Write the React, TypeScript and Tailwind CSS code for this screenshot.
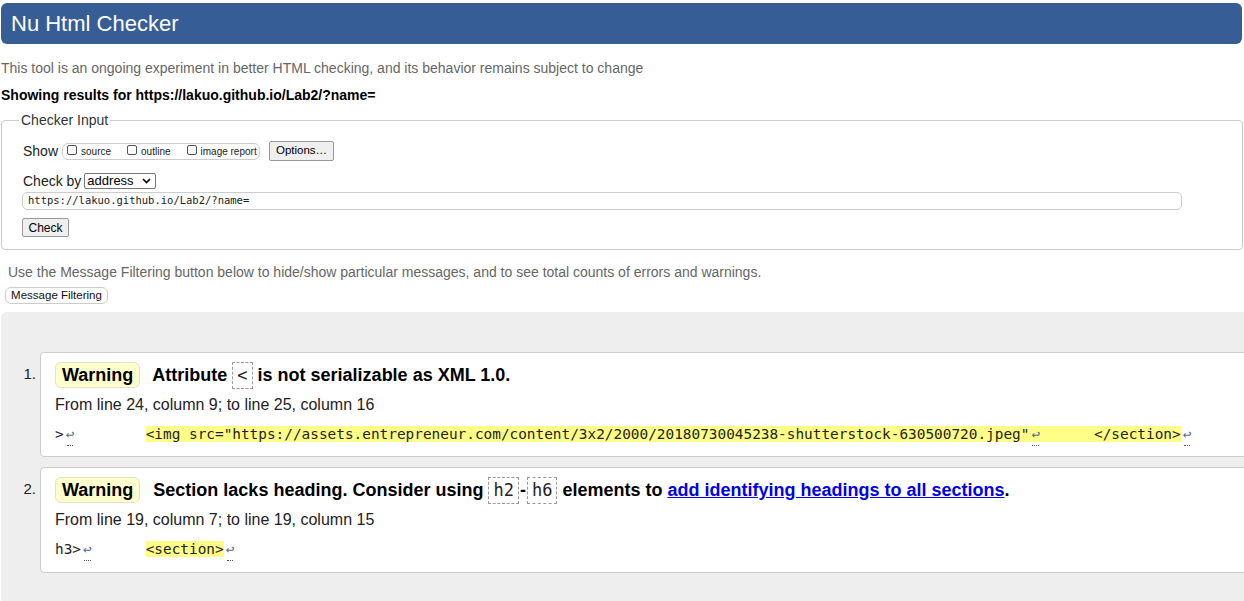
import React from "react";

const sans = { fontFamily: '"Liberation Sans", Arial, sans-serif' };

function LF() {
  return (
    <span className="relative inline-block text-[#5b6b8c] mx-[2px]">
      ↩
      <span className="absolute left-[1px] right-[1px] bottom-[-3px] border-b border-dotted border-[#555]" />
    </span>
  );
}

function CodeBox({ children }: { children: React.ReactNode }) {
  return (
    <span className="inline-flex items-center h-[27px] px-[4px] mx-[5px] border border-dashed border-[#999] font-['DejaVu_Sans_Mono',monospace] font-normal text-[17px] text-[#222]">
      {children}
    </span>
  );
}

function Badge({ mr = "mr-[12px]" }: { mr?: string }) {
  return (
    <span className={"inline-flex items-center h-[26px] px-[6px] rounded-[6px] bg-[#ffffcc] border border-[#e2e2c8] text-[18px] font-bold text-black " + mr}>
      Warning
    </span>
  );
}

function Check() {
  return <span className="inline-block shrink-0 w-[10px] h-[10px] border border-[#555] rounded-[2px] mr-[4px] mb-[3px] bg-white" />;
}

export default function App() {
  return (
    <div className="w-[1244px] h-[601px] overflow-hidden bg-white text-black" style={sans}>
      <div className="pl-[1px] pr-[2px] pt-[3px]">
        <div className="h-[41px] rounded-[6px] bg-[#365d95] flex items-center pl-[10px] text-white text-[22px]">
          Nu Html Checker
        </div>
        <div className="mt-[16px] h-[17px] leading-[17px] text-[14px] text-[#666]">
          This tool is an ongoing experiment in better HTML checking, and its behavior remains subject to change
        </div>
        <div className="mt-[10px] h-[17px] leading-[17px] text-[14px] font-bold">
          Showing results for https://lakuo.github.io/Lab2/?name=
        </div>

        <fieldset className="mt-[8px] border border-[#ccc] rounded-[4px] pl-[21px] pr-[60px] pb-[12px] pt-[13px]">
          <legend className="ml-[-4px] px-[2px] text-[14px] text-[#333] leading-[17px]">Checker Input</legend>
          <div className="flex items-center h-[20px] -mt-[1px]">
            <span className="text-[14px] text-[#222] mr-[4px]">Show</span>
            <span className="inline-flex items-center whitespace-nowrap h-[17px] w-[198px] rounded-[6px] border border-[#ccc] pl-[4px] text-[10px] text-[#222]">
              <Check />
              <span className="mr-[16px]">source</span>
              <Check />
              <span className="mr-[16px]">outline</span>
              <Check />
              <span>image report</span>
            </span>
            <span className="ml-[9px] inline-flex items-center justify-center h-[20px] w-[65px] border border-[#999] bg-[#efefef] rounded-[2px] text-[11.5px]">
              Options…
            </span>
          </div>
          <div className="flex items-center h-[20px] mt-[10px]">
            <span className="text-[14px] text-[#222] mr-[3px]">Check by</span>
            <span className="inline-flex items-center justify-between h-[16px] w-[72px] border border-[#767676] rounded-[2px] pl-[2px] pr-[4px] text-[13px]">
              address
              <svg width="9" height="6" viewBox="0 0 9 6">
                <path d="M1 1l3.5 3.5L8 1" fill="none" stroke="#000" strokeWidth="1.6" />
              </svg>
            </span>
          </div>
          <div className="mt-[1px] h-[18px] w-[1160px] -ml-[1px] border border-[#ccc] rounded-[5px] flex items-center pl-[5px] font-['DejaVu_Sans_Mono',monospace] text-[10.5px] text-[#222]">
            https://lakuo.github.io/Lab2/?name=
          </div>
          <div className="mt-[8px] -ml-[1px] h-[19px] w-[47px] border border-[#999] bg-[#efefef] rounded-[2px] flex items-center justify-center text-[12px]">
            Check
          </div>
        </fieldset>

        <div className="mt-[14px] pl-[7px] h-[17px] leading-[17px] text-[14px] text-[#666]">
          Use the Message Filtering button below to hide/show particular messages, and to see total counts of errors and warnings.
        </div>
        <div className="mt-[6px] ml-[4px] inline-flex items-center justify-center h-[17px] w-[103px] border border-[#ccc] rounded-[6px] text-[11.5px] text-[#111]">
          Message Filtering
        </div>
      </div>

      <div className="mt-[6px] ml-[1px] w-[1300px] h-[300px] bg-[#eeeeee] rounded-tl-[6px] pt-[40px]">
        <div className="flex">
          <div className="w-[39px] pt-[11px] pr-[4px] text-right text-[15px] text-[#222]">1.</div>
          <div className="flex-1 h-[105px] bg-white border border-[#ccc] rounded-[4px] pl-[14px] pt-[9px]">
            <div className="flex items-center h-[27px] text-[18px] font-bold">
              <Badge />
              Attribute
              <CodeBox>&lt;</CodeBox>
              is not serializable as XML 1.0.
            </div>
            <div className="mt-[7px] h-[18px] leading-[18px] text-[16px] text-[#222]">From line 24, column 9; to line 25, column 16</div>
            <div className="mt-[11px] h-[18px] leading-[18px] whitespace-pre font-['DejaVu_Sans_Mono',monospace] text-[14.4px] text-[#222]">
              &gt;<LF />{"        "}
              <span className="bg-[#ffff88]">
                &lt;img src="https://assets.entrepreneur.com/content/3x2/2000/20180730045238-shutterstock-630500720.jpeg"<LF />{"      "}&lt;/section&gt;
              </span>
              <LF />
            </div>
          </div>
        </div>
        <div className="flex mt-[10px]">
          <div className="w-[39px] pt-[11px] pr-[4px] text-right text-[15px] text-[#222]">2.</div>
          <div className="flex-1 h-[106px] bg-white border border-[#ccc] rounded-[4px] pl-[14px] pt-[9px]">
            <div className="flex items-center h-[27px] text-[18px] font-bold">
              <Badge mr="mr-[13px]" />
              Section lacks heading. Consider using
              <CodeBox>h2</CodeBox>
              <span className="-mx-[4px]">-</span>
              <CodeBox>h6</CodeBox>
              elements to&nbsp;
              <span className="text-[#0000ee] underline">add identifying headings to all sections</span>.
            </div>
            <div className="mt-[7px] h-[18px] leading-[18px] text-[16px] text-[#222]">From line 19, column 7; to line 19, column 15</div>
            <div className="mt-[11px] h-[18px] leading-[18px] whitespace-pre font-['DejaVu_Sans_Mono',monospace] text-[14.4px] text-[#222]">
              h3&gt;<LF />{"      "}
              <span className="bg-[#ffff88]">&lt;section&gt;</span>
              <LF />
            </div>
          </div>
        </div>
      </div>
    </div>
  );
}
